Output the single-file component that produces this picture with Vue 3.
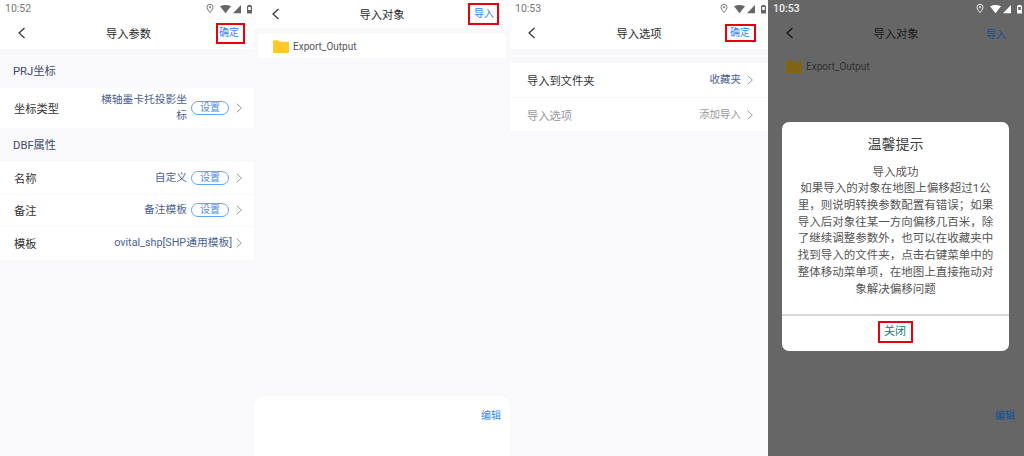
<script setup>
const Chev = 'M.7 .7L5.300 5l-4.600 4.300'
const BackPath = 'M6.500 1L1 6l5.500 5'
const body1 = '导入成功'
const body2 = '如果导入的对象在地图上偏移超过1公里，则说明转换参数配置有错误；如果导入后对象往某一方向偏移几百米，除了继续调整参数外，也可以在收藏夹中找到导入的文件夹，点击右键菜单中的整体移动菜单项，在地图上直接拖动对象解决偏移问题'
const dbfRows = [
  { label: '名称', value: '自定义', btn: true },
  { label: '备注', value: '备注模板', btn: true },
  { label: '模板', value: 'ovital_shp[SHP通用模板]', btn: false },
]
</script>

<template>
  <div class="shot">
    <!-- panel 1 -->
    <section class="panel p1">
      <div class="status">
        <span class="time">10:52</span>
        <svg class="sicons" width="46" height="12" viewBox="0 0 46 12">
          <path d="M4 1.300a3 3 0 0 1 3 3C7 6.300 4 9.700 4 9.700S1 6.300 1 4.300a3 3 0 0 1 3-3z" fill="none" stroke="#777" stroke-width="1"/><circle cx="4" cy="4.300" r="1" fill="#777"/>
          <path d="M14 3.200Q19.500 .6 25 3.200l-5.500 7z" fill="#666"/><path d="M35 2v8.200h-8z" fill="#666"/>
          <path d="M42 2h3v.8h1v7.700h-5V2.800h1z" fill="#666"/><rect x="42.200" y="4" width="2.600" height="3" fill="#fff"/>
        </svg>
      </div>
      <header class="nav">
        <svg class="back" width="8" height="12" viewBox="0 0 8 12"><path :d="BackPath" fill="none" stroke="#333" stroke-width="1.200"/></svg>
        <span class="title shift">导入参数</span>
        <span class="action boxed b1">确定</span>
      </header>
      <h3 class="sec first">PRJ坐标</h3>
      <div class="group">
        <div class="row tall">
          <span class="lab">坐标类型</span>
          <span class="val wrap">横轴墨卡托投影坐标</span>
          <span class="btn">设置</span>
          <svg class="chev" width="6" height="10" viewBox="0 0 6 10"><path :d="Chev" fill="none" stroke="#999" stroke-width="1"/></svg>
        </div>
      </div>
      <h3 class="sec">DBF属性</h3>
      <div class="group">
        <div v-for="r in dbfRows" :key="r.label" class="row">
          <span class="lab">{{ r.label }}</span>
          <span class="val">{{ r.value }}</span>
          <span v-if="r.btn" class="btn">设置</span>
          <svg class="chev" :class="{ near: !r.btn }" width="6" height="10" viewBox="0 0 6 10"><path :d="Chev" fill="none" stroke="#999" stroke-width="1"/></svg>
        </div>
      </div>
    </section>

    <!-- panel 2 -->
    <section class="panel p2">
      <header class="nav nostatus">
        <svg class="back" width="8" height="12" viewBox="0 0 8 12"><path :d="BackPath" fill="none" stroke="#333" stroke-width="1.200"/></svg>
        <span class="title">导入对象</span>
        <span class="action boxed b2">导入</span>
      </header>
      <div class="file">
        <svg width="16" height="13" viewBox="0 0 16 13"><path d="M0 1.500A1.200 1.200 0 0 1 1.200 .3h4l1.300 1.400h8.300A1.200 1.200 0 0 1 16 2.900v8.900A1.200 1.200 0 0 1 14.800 13H1.200A1.200 1.200 0 0 1 0 11.800z" fill="#ffc926"/></svg>
        <span>Export_Output</span>
      </div>
      <div class="grow"></div>
      <footer class="sheet"><span class="edit">编辑</span></footer>
    </section>

    <!-- panel 3 -->
    <section class="panel p3">
      <div class="status">
        <span class="time">10:53</span>
        <svg class="sicons" width="46" height="12" viewBox="0 0 46 12">
          <path d="M4 1.300a3 3 0 0 1 3 3C7 6.300 4 9.700 4 9.700S1 6.300 1 4.300a3 3 0 0 1 3-3z" fill="none" stroke="#777" stroke-width="1"/><circle cx="4" cy="4.300" r="1" fill="#777"/>
          <path d="M14 3.200Q19.500 .6 25 3.200l-5.500 7z" fill="#666"/><path d="M35 2v8.200h-8z" fill="#666"/>
          <path d="M42 2h3v.8h1v7.700h-5V2.800h1z" fill="#666"/><rect x="42.200" y="4" width="2.600" height="3" fill="#fff"/>
        </svg>
      </div>
      <header class="nav">
        <svg class="back" width="8" height="12" viewBox="0 0 8 12"><path :d="BackPath" fill="none" stroke="#333" stroke-width="1.200"/></svg>
        <span class="title">导入选项</span>
        <span class="action boxed b3">确定</span>
      </header>
      <div class="group opts">
        <div class="row opt">
          <span class="lab">导入到文件夹</span>
          <span class="val">收藏夹</span>
          <svg class="chev" width="6" height="10" viewBox="0 0 6 10"><path :d="Chev" fill="none" stroke="#999" stroke-width="1"/></svg>
        </div>
        <div class="row opt">
          <span class="lab dim">导入选项</span>
          <span class="val dim">添加导入</span>
          <svg class="chev" width="6" height="10" viewBox="0 0 6 10"><path :d="Chev" fill="none" stroke="#999" stroke-width="1"/></svg>
        </div>
      </div>
    </section>

    <!-- panel 4 -->
    <section class="panel p4">
      <div class="status">
        <span class="time lite">10:53</span>
        <svg class="sicons" width="46" height="12" viewBox="0 0 46 12">
          <path d="M4 1.300a3 3 0 0 1 3 3C7 6.300 4 9.700 4 9.700S1 6.300 1 4.300a3 3 0 0 1 3-3z" fill="none" stroke="#eee" stroke-width="1"/><circle cx="4" cy="4.300" r="1" fill="#eee"/>
          <path d="M14 3.200Q19.500 .6 25 3.200l-5.500 7z" fill="#fff"/><path d="M35 2v8.200h-8z" fill="#fff"/>
          <path d="M42 2h3v.8h1v7.700h-5V2.800h1z" fill="#fff"/><rect x="42.200" y="4" width="2.600" height="3" fill="#666"/>
        </svg>
      </div>
      <header class="nav dark">
        <svg class="back" width="8" height="12" viewBox="0 0 8 12"><path :d="BackPath" fill="none" stroke="#141414" stroke-width="1.200"/></svg>
        <span class="title">导入对象</span>
        <span class="action">导入</span>
      </header>
      <div class="file dark">
        <svg width="16" height="13" viewBox="0 0 16 13"><path d="M0 1.500A1.200 1.200 0 0 1 1.200 .3h4l1.300 1.400h8.300A1.200 1.200 0 0 1 16 2.900v8.900A1.200 1.200 0 0 1 14.800 13H1.200A1.200 1.200 0 0 1 0 11.800z" fill="#7f6513"/></svg>
        <span>Export_Output</span>
      </div>
      <div class="grow"></div>
      <footer class="sheet dark"><span class="edit">编辑</span></footer>
      <div class="modal">
        <h2>温馨提示</h2>
        <p class="msg">{{ body1 }}<br />{{ body2 }}</p>
        <div class="close"><span>关闭</span></div>
      </div>
    </section>
  </div>
</template>

<style>
html, body { margin: 0; background: #fff; }
</style>

<style scoped>
.shot {
  width: 1024px;
  height: 456px;
  overflow: hidden;
  display: grid;
  grid-template-columns: 254px 256px 258px 256px;
  font-family: Roboto, "Noto Sans CJK SC", sans-serif;
  color: #333;
}
.panel { display: flex; flex-direction: column; height: 456px; background: #f9f9fc; position: relative; }
.status { height: 17px; background: #fff; display: flex; align-items: center; justify-content: space-between; padding: 0 2px 0 5px; }
.time { font-size: 10.500px; color: #777; }
.sicons { margin-top: 1px; }
.nav { height: 32px; background: #fff; display: flex; align-items: center; justify-content: space-between; padding: 0 11px 0 18px; position: relative; flex: none; }
.nav.nostatus { height: 28px; padding-right: 13px; }
.back { flex: none; }
.title { position: absolute; left: 0; right: 0; text-align: center; font-size: 11.250px; color: #2a2a2a; pointer-events: none; }
.title.shift { left: 3px; }
.action { font-size: 10px; color: #1e88ff; position: relative; z-index: 1; }
.boxed { outline: 2px solid #e8000f; line-height: 14px; }
.b1 { padding: 1px 4px 2px 1px; }
.b2 { padding: 2px 3px 2px 4px; }
.b3 { padding: 0 4px 0 3px; }
.p3 .nav { padding-right: 14px; }
.sec { height: 17px; line-height: 17px; font-size: 11.250px; font-weight: 400; color: #3d4966; padding: 0 0 0 13px; margin: 9px 0 8px; }
.sec.first { margin-top: 14px; }
.group { background: #fff; flex: none; }
.row { height: 32.500px; display: flex; align-items: center; padding-left: 14px; padding-right: 12px; font-size: 11.250px; border-bottom: 1px solid #f9f9fc; box-sizing: border-box; }
.row:last-child { border-bottom: 0; }
.row.tall { height: 40px; }
.lab { color: #333; flex: none; }
.val { margin-left: auto; color: #4b6290; font-size: 10.750px; text-align: right; line-height: 16px; }
.val.wrap { width: 87px; flex: none; }
.btn { flex: none; width: 36px; height: 12px; line-height: 12px; margin-left: 4px; border: 1px solid #5aa6ff; border-radius: 8px; text-align: center; font-size: 10px; color: #4c8fe6; }
.chev { flex: none; margin-left: 7px; }
.chev.near { margin-left: 4px; }
.file { display: flex; align-items: center; gap: 4px; margin: 6px 4px 0; height: 24px; padding-left: 15px; background: #fff; font-size: 10px; color: #555; flex: none; }
.grow { flex: 1; }
.sheet { height: 60px; background: #fff; border-radius: 10px 10px 0 0; display: flex; justify-content: flex-end; padding: 13px 9px 0 0; box-sizing: border-box; flex: none; }
.edit { font-size: 10px; color: #1e88ff; line-height: 14px; }
.opts { margin-top: 14px; }
.row.opt { height: 35px; padding-left: 17px; padding-right: 15px; }
.row.opt:last-child { height: 33px; }
.opt .val { font-size: 10.500px; }
.opt .chev { margin-left: 6px; }
.dim { color: #999 !important; }
.p4 { background: #666; }
.p4 .status { background: #666; }
.lite { color: #eee; font-weight: 500; }
.nav.dark { background: #666; padding-right: 18px; }
.dark .title { color: #1a1a1a; }
.dark .action { color: #0f4f99; }
.file.dark { background: #666; color: #303030; margin: 5px 0 0; height: 25px; padding-left: 18px; }
.sheet.dark { background: #666; padding-top: 0; padding-right: 9px; }
.sheet.dark .edit { color: #0f4f99; margin-top: 13px; }
.modal { position: absolute; left: 14px; top: 122px; width: 227px; height: 229px; background: #fff; border-radius: 7px; display: flex; flex-direction: column; align-items: center; }
.modal h2 { margin: 12px 0 0; font-size: 14px; font-weight: 400; line-height: 20px; color: #444; }
.msg { margin: 9.600px 0 0; width: 198px; font-size: 11.500px; line-height: 16.700px; text-align: center; color: #555; flex: 1; }
.close { align-self: stretch; height: 31px; padding-bottom: 4px; border-top: 2px solid #d8d8d8; display: flex; align-items: center; justify-content: center; }
.close span { font-size: 11px; color: #16806f; outline: 2px solid #e8000f; padding: 2px 5px 2px 4px; line-height: 14px; }
</style>
